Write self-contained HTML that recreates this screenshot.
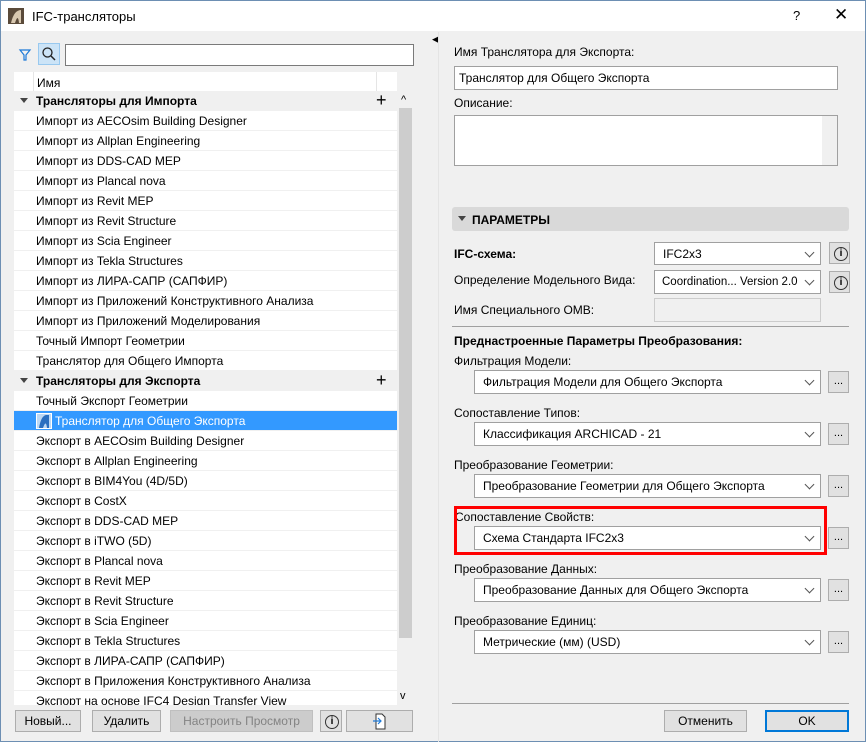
<!DOCTYPE html><html><head><meta charset="utf-8"><style>
*{box-sizing:border-box;margin:0;padding:0}
body{width:866px;height:742px;overflow:hidden;background:#f0f0f0;font-family:"Liberation Sans",sans-serif;font-size:12px;color:#000;position:relative}
.a{position:absolute}
.win{left:0;top:0;width:866px;height:742px;border:1px solid #6d8fb3}
.tb{left:1px;top:1px;width:864px;height:30px;background:#fff}
.row{position:absolute;left:14px;width:383px;height:20px;background:#fff;border-bottom:1px solid #f0f0f0;padding-left:22px;line-height:20px;white-space:nowrap}
.grp{background:#f0f0f0;font-weight:bold}
.sel{background:#3399ff;color:#fff}
.inp{position:absolute;background:#fff;border:1px solid #a0a0a0;padding-left:6px;line-height:20px;white-space:nowrap}
.dd{position:absolute;background:#fff;border:1px solid #a0a0a0;padding-left:8px;line-height:22px;white-space:nowrap}
.dd:after{content:"";position:absolute;right:7px;top:6px;width:6px;height:6px;border-right:1px solid #555;border-bottom:1px solid #555;transform:rotate(45deg)}
.btn{position:absolute;background:#e1e1e1;border:1px solid #adadad;text-align:center;line-height:20px}
.lb{position:absolute;white-space:nowrap}
.sm{position:absolute;width:21px;height:22px;background:#e1e1e1;border:1px solid #adadad;text-align:center;line-height:18px;font-size:11px}
.info{position:absolute;width:21px;height:22px;background:#e1e1e1;border:1px solid #adadad}
.info:after{content:"i";position:absolute;left:4px;top:4px;width:12px;height:12px;border:1px solid #333;border-radius:50%;text-align:center;font-size:10px;line-height:12px;font-weight:bold}
.tri{position:absolute;left:6px;top:7px;width:0;height:0;border-left:4px solid transparent;border-right:4px solid transparent;border-top:5px solid #444}
.plus{position:absolute;left:362px;top:-1px;font-size:18px;font-weight:normal}
</style></head><body>
<div class="a win"></div>
<div class="a tb"></div>
<svg class="a" style="left:8px;top:8px" width="16" height="16"><rect width="16" height="16" fill="#5a4a3a"/><path d="M3 15 Q6 2 13 2 L13 15 L11 15 Q10 5 7 15Z" fill="#d8c8b0"/></svg>
<div class="lb" style="left:32px;top:9px;font-size:13px">IFC-трансляторы</div>
<div class="lb" style="left:793px;top:8px;font-size:13px">?</div>
<div class="lb" style="left:834px;top:5px;font-size:17px">✕</div>
<svg class="a" style="left:18px;top:48px" width="14" height="14"><path d="M2 2 H12 L8 7 V12 H6 V7 Z" fill="none" stroke="#1e7ad8" stroke-width="1.2"/></svg>
<div class="a" style="left:38px;top:43px;width:22px;height:22px;background:#cce4f7;border:1px solid #99c9ef"></div>
<svg class="a" style="left:41px;top:46px" width="16" height="16"><circle cx="6.5" cy="6.5" r="4.5" fill="none" stroke="#222" stroke-width="1.3"/><path d="M10 10 L14 14" stroke="#222" stroke-width="1.5"/></svg>
<div class="inp" style="left:65px;top:44px;width:349px;height:22px;border-color:#7a7a7a"></div>
<div class="a" style="left:14px;top:72px;width:383px;height:20px;background:#fff"></div>
<div class="a" style="left:33px;top:72px;width:1px;height:20px;background:#e5e5e5"></div>
<div class="a" style="left:376px;top:72px;width:1px;height:20px;background:#e5e5e5"></div>
<div class="lb" style="left:37px;top:76px">Имя</div>
<div class="a" style="left:397px;top:92px;width:16px;height:613px;background:#f0f0f0"></div>
<div class="a" style="left:399px;top:108px;width:13px;height:530px;background:#cdcdcd"></div>
<div class="lb" style="left:401px;top:94px;font-size:11px">&#94;</div>
<div class="lb" style="left:400px;top:690px;font-size:11px">v</div>
<div class="row grp" style="top:91px"><span class="tri"></span>Трансляторы для Импорта<span class="plus">+</span></div>
<div class="row" style="top:111px">Импорт из AECOsim Building Designer</div>
<div class="row" style="top:131px">Импорт из Allplan Engineering</div>
<div class="row" style="top:151px">Импорт из DDS-CAD MEP</div>
<div class="row" style="top:171px">Импорт из Plancal nova</div>
<div class="row" style="top:191px">Импорт из Revit MEP</div>
<div class="row" style="top:211px">Импорт из Revit Structure</div>
<div class="row" style="top:231px">Импорт из Scia Engineer</div>
<div class="row" style="top:251px">Импорт из Tekla Structures</div>
<div class="row" style="top:271px">Импорт из ЛИРА-САПР (САПФИР)</div>
<div class="row" style="top:291px">Импорт из Приложений Конструктивного Анализа</div>
<div class="row" style="top:311px">Импорт из Приложений Моделирования</div>
<div class="row" style="top:331px">Точный Импорт Геометрии</div>
<div class="row" style="top:351px">Транслятор для Общего Импорта</div>
<div class="row grp" style="top:371px"><span class="tri"></span>Трансляторы для Экспорта<span class="plus">+</span></div>
<div class="row" style="top:391px">Точный Экспорт Геометрии</div>
<div class="row sel" style="top:411px;padding-left:41px"><svg class="a" style="left:22px;top:2px" width="16" height="16"><rect x=".5" y=".5" width="15" height="15" fill="#bcd8f4" stroke="#fff"/><path d="M3 15 Q5 3 10 2 L13 2 L13 15 L11 15 Q10 6 7 15Z" fill="#2a6fc0"/></svg>Транслятор для Общего Экспорта</div>
<div class="row" style="top:431px">Экспорт в AECOsim Building Designer</div>
<div class="row" style="top:451px">Экспорт в Allplan Engineering</div>
<div class="row" style="top:471px">Экспорт в BIM4You (4D/5D)</div>
<div class="row" style="top:491px">Экспорт в CostX</div>
<div class="row" style="top:511px">Экспорт в DDS-CAD MEP</div>
<div class="row" style="top:531px">Экспорт в iTWO (5D)</div>
<div class="row" style="top:551px">Экспорт в Plancal nova</div>
<div class="row" style="top:571px">Экспорт в Revit MEP</div>
<div class="row" style="top:591px">Экспорт в Revit Structure</div>
<div class="row" style="top:611px">Экспорт в Scia Engineer</div>
<div class="row" style="top:631px">Экспорт в Tekla Structures</div>
<div class="row" style="top:651px">Экспорт в ЛИРА-САПР (САПФИР)</div>
<div class="row" style="top:671px">Экспорт в Приложения Конструктивного Анализа</div>
<div class="row" style="top:691px;height:14px;overflow:hidden;border:0">Экспорт на основе IFC4 Design Transfer View</div>
<div class="btn" style="left:15px;top:710px;width:66px;height:22px">Новый...</div>
<div class="btn" style="left:92px;top:710px;width:69px;height:22px">Удалить</div>
<div class="btn" style="left:170px;top:710px;width:143px;height:22px;background:#cccccc;border-color:#bfbfbf;color:#838383">Настроить Просмотр</div>
<div class="info" style="left:320px;top:710px;width:22px"></div>
<div class="btn" style="left:346px;top:710px;width:67px;height:22px"><svg style="margin-top:2px" width="16" height="17"><path d="M4 1 H10 L13 4 V16 H4 Z" fill="#fff" stroke="#333"/><path d="M1 8 H9 M6 5 L9 8 L6 11" fill="none" stroke="#1e7ad8" stroke-width="1.2"/></svg></div>
<div class="lb" style="left:432px;top:34px;font-size:9px">◀</div>
<div class="a" style="left:438px;top:32px;width:1px;height:710px;background:#e4e4e4"></div>
<div class="lb" style="left:454px;top:45px">Имя Транслятора для Экспорта:</div>
<div class="inp" style="left:454px;top:66px;width:384px;height:24px;line-height:22px;padding-left:4px">Транслятор для Общего Экспорта</div>
<div class="lb" style="left:454px;top:96px">Описание:</div>
<div class="inp" style="left:454px;top:115px;width:384px;height:51px"><div class="a" style="right:0;top:0;width:15px;height:49px;background:#f0f0f0"></div></div>
<div class="a" style="left:452px;top:207px;width:397px;height:24px;background:#d9d9d9;border-radius:3px"></div>
<div class="a" style="left:458px;top:216px;width:0;height:0;border-left:4px solid transparent;border-right:4px solid transparent;border-top:5px solid #444"></div>
<div class="lb" style="left:472px;top:213px;font-weight:bold">ПАРАМЕТРЫ</div>
<div class="lb" style="left:454px;top:247px;font-weight:bold">IFC-схема:</div>
<div class="dd" style="left:654px;top:242px;width:167px;height:23px">IFC2x3</div>
<div class="info" style="left:829px;top:242px"></div>
<div class="lb" style="left:454px;top:273px">Определение Модельного Вида:</div>
<div class="dd" style="left:654px;top:270px;width:167px;height:24px;padding-left:7px;font-size:11.5px">Coordination... Version 2.0</div>
<div class="info" style="left:829px;top:271px"></div>
<div class="lb" style="left:454px;top:303px">Имя Специального ОМВ:</div>
<div class="a" style="left:654px;top:298px;width:167px;height:24px;background:#f0f0f0;border:1px solid #ccc"></div>
<div class="a" style="left:452px;top:326px;width:397px;height:1px;background:#a0a0a0"></div>
<div class="lb" style="left:454px;top:334px;font-weight:bold">Преднастроенные Параметры Преобразования:</div>
<div class="lb" style="left:454px;top:354px">Фильтрация Модели:</div>
<div class="dd" style="left:474px;top:370px;width:347px;height:24px">Фильтрация Модели для Общего Экспорта</div>
<div class="sm" style="left:828px;top:371px">...</div>
<div class="lb" style="left:454px;top:406px">Сопоставление Типов:</div>
<div class="dd" style="left:474px;top:422px;width:347px;height:24px">Классификация ARCHICAD - 21</div>
<div class="sm" style="left:828px;top:423px">...</div>
<div class="lb" style="left:454px;top:458px">Преобразование Геометрии:</div>
<div class="dd" style="left:474px;top:474px;width:347px;height:24px">Преобразование Геометрии для Общего Экспорта</div>
<div class="sm" style="left:828px;top:475px">...</div>
<div class="lb" style="left:455px;top:510px">Сопоставление Свойств:</div>
<div class="dd" style="left:474px;top:526px;width:347px;height:24px">Схема Стандарта IFC2x3</div>
<div class="sm" style="left:828px;top:527px">...</div>
<div class="a" style="left:454px;top:506px;width:373px;height:49px;border:3px solid #f00"></div>
<div class="lb" style="left:454px;top:562px">Преобразование Данных:</div>
<div class="dd" style="left:474px;top:578px;width:347px;height:24px">Преобразование Данных для Общего Экспорта</div>
<div class="sm" style="left:828px;top:579px">...</div>
<div class="lb" style="left:454px;top:614px">Преобразование Единиц:</div>
<div class="dd" style="left:474px;top:630px;width:347px;height:24px">Метрические (мм) (USD)</div>
<div class="sm" style="left:828px;top:631px">...</div>
<div class="a" style="left:452px;top:703px;width:397px;height:1px;background:#a0a0a0"></div>
<div class="btn" style="left:664px;top:710px;width:83px;height:22px">Отменить</div>
<div class="btn" style="left:765px;top:710px;width:84px;height:22px;border:2px solid #0078d7;line-height:18px">OK</div>
</body></html>
